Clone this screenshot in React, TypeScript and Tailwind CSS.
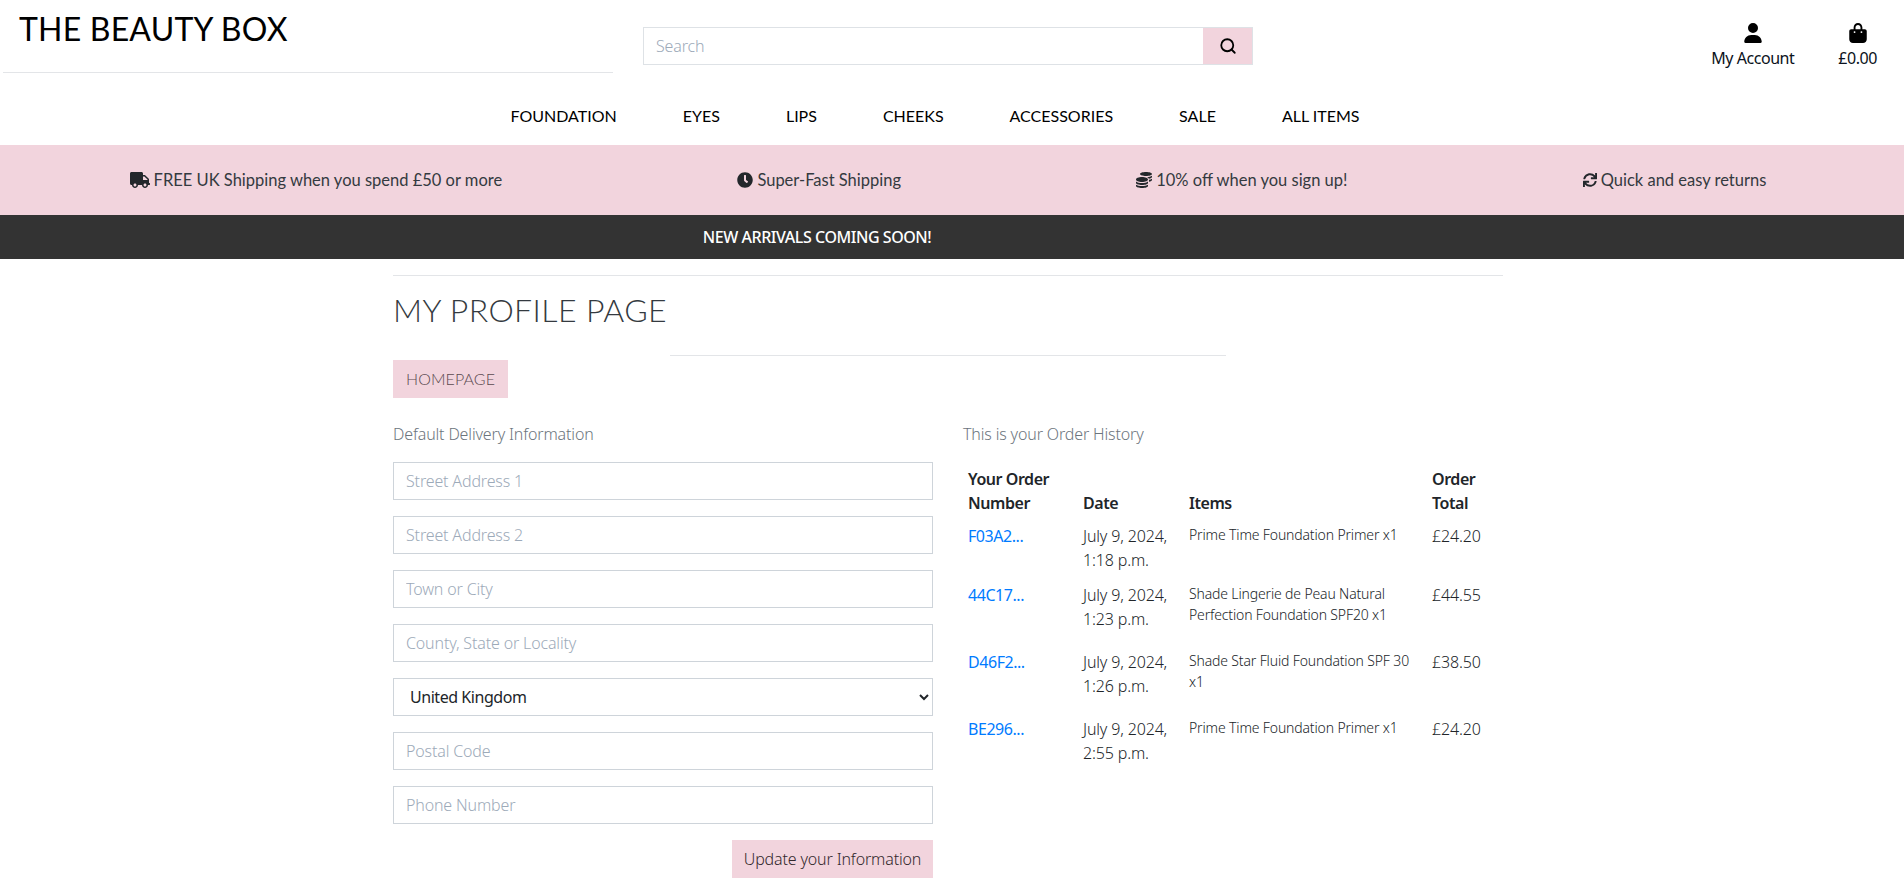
import { FaCoins, FaClock, FaSync, FaTruck } from 'react-icons/fa';
import { FaBagShopping, FaUser } from 'react-icons/fa6';
import { Search } from 'lucide-react';

const navLinks = ['FOUNDATION', 'EYES', 'LIPS', 'CHEEKS', 'ACCESSORIES', 'SALE', 'ALL ITEMS'];

const fields = ['Street Address 1', 'Street Address 2', 'Town or City', 'County, State or Locality'];

const orders = [
  { id: 'F03A2...', date: 'July 9, 2024,', time: '1:18 p.m.', item: 'Prime Time Foundation Primer x1', total: '£24.20' },
  { id: '44C17...', date: 'July 9, 2024,', time: '1:23 p.m.', item: 'Shade Lingerie de Peau Natural Perfection Foundation SPF20 x1', total: '£44.55' },
  { id: 'D46F2...', date: 'July 9, 2024,', time: '1:26 p.m.', item: 'Shade Star Fluid Foundation SPF 30 x1', total: '£38.50' },
  { id: 'BE296...', date: 'July 9, 2024,', time: '2:55 p.m.', item: 'Prime Time Foundation Primer x1', total: '£24.20' },
];

const inputClass =
  "block h-[38px] w-full border border-[#ced4da] bg-white px-3 text-[16px] text-[#495057] placeholder:text-[#9daab9] outline-none";

export default function App() {
  return (
    <div className="h-[888px] overflow-hidden bg-white font-['Noto_Sans',sans-serif] text-[16px] font-light tracking-[-0.15px] text-[#212529]">
      {/* Header */}
      <header className="flex h-[101px]">
        <div className="ml-[3px] h-[73px] w-[610px] border-b border-[#e3e5e8] pl-[16px] pt-[7px]">
          <a className="font-['Lato',sans-serif] text-[32px] leading-[44px] font-normal tracking-[0.2px] text-black">THE BEAUTY BOX</a>
        </div>
        <div className="mt-[27px] ml-[30px] flex h-[38px] w-[610px] border border-[#dee2e6]">
          <input placeholder="Search" className="min-w-0 flex-1 px-3 text-[16px] outline-none placeholder:text-[#9daab9]" />
          <button className="flex w-[49px] items-center justify-center bg-[#f2d4dd] text-black">
            <Search size={18} strokeWidth={2.4} />
          </button>
        </div>
        <div className="ml-auto flex pt-[23px] pr-[27px] font-normal tracking-[-0.45px] text-[#0b1220]">
          <a className="flex flex-col items-center">
            <FaUser className="h-5 w-5 text-black" />
            <span className="mt-[3px] leading-[24px]">My Account</span>
          </a>
          <a className="ml-[44px] flex flex-col items-center">
            <FaBagShopping className="h-5 w-5 text-black" />
            <span className="mt-[3px] leading-[24px]">£0.00</span>
          </a>
        </div>
      </header>

      {/* Nav */}
      <nav className="flex h-[44px] items-start justify-center gap-[66px] pt-[4px] pr-[34px] font-['Lato',sans-serif] text-[16px] leading-[22px] font-normal tracking-normal text-black">
        {navLinks.map((link) => (
          <a key={link}>{link}</a>
        ))}
      </nav>

      {/* Delivery banner */}
      <div className="flex h-[70px] items-center justify-around bg-[#f2d4dd] pr-[20px] pl-[12px] font-['Lato',sans-serif] text-[16.5px] font-normal tracking-normal text-[#343a40]">
        <span className="flex items-center gap-[4px]"><FaTruck className="h-4 w-[20px] text-[#23272b]" />FREE UK Shipping when you spend £50 or more</span>
        <span className="flex items-center gap-[4px]"><FaClock className="h-4 w-4 text-[#23272b]" />Super-Fast Shipping</span>
        <span className="flex items-center gap-[4px]"><FaCoins className="h-4 w-4 text-[#23272b]" />10% off when you sign up!</span>
        <span className="flex items-center gap-[4px]"><FaSync className="h-[14px] w-[14px] text-[#23272b]" />Quick and easy returns</span>
      </div>

      {/* Announcement */}
      <div className="flex h-[44px] items-center justify-center bg-[#333333] pr-[270px] text-[16px] font-medium tracking-[-0.45px] text-white">
        NEW ARRIVALS COMING SOON!
      </div>

      {/* Main */}
      <main className="mt-[16px] ml-[393px] w-[1110px]">
        <hr className="border-[#e3e5e8]" />
        <div className="relative h-[84px]">
          <h1 className="pt-[12px] font-['Lato',sans-serif] text-[32px] leading-[44px] font-light tracking-[0.4px] text-[#343a40]">MY PROFILE PAGE</h1>
          <hr className="absolute top-[79px] left-[277px] w-[556px] border-[#e3e5e8]" />
        </div>
        <a className="inline-flex h-[38px] items-center bg-[#f2d4dd] px-[13px] font-['Lato',sans-serif] text-[16px] font-light tracking-[0.1px] text-[#5b4a50]">HOMEPAGE</a>

        <div className="mt-[24px] flex gap-[30px]">
          <section className="w-[540px]">
            <p className="leading-[24px] text-[#6c757d]">Default Delivery Information</p>
            <form className="mt-[16px] flex flex-col gap-[16px]">
              {fields.map((field) => (
                <input key={field} placeholder={field} className={inputClass} />
              ))}
              <select defaultValue="United Kingdom" className="h-[38px] w-full border border-[#ced4da] bg-white pl-[12px] pr-[2px] text-[16px] font-normal tracking-[-0.45px] text-[#212529] outline-none">
                <option>United Kingdom</option>
              </select>
              <input placeholder="Postal Code" className={inputClass} />
              <input placeholder="Phone Number" className={inputClass} />
              <div className="flex justify-end">
                <button type="button" className="h-[38px] w-[201px] bg-[#f2d4dd] text-[16px] text-[#33282c]">Update your Information</button>
              </div>
            </form>
          </section>

          <section className="w-[540px]">
            <p className="leading-[24px] text-[#6c757d]">This is your Order History</p>
            <table className="mt-[17px] ml-[1px] w-[539px] table-fixed border-collapse text-left">
              <colgroup>
                <col className="w-[115px]" />
                <col className="w-[106px]" />
                <col className="w-[243px]" />
                <col />
              </colgroup>
              <thead>
                <tr className="align-bottom">
                  <th className="px-[4px] pt-[4px] pb-[5px] font-semibold tracking-[-0.45px] leading-[24px]">Your Order<br />Number</th>
                  <th className="px-[4px] pb-[5px] font-semibold tracking-[-0.45px] leading-[24px]">Date</th>
                  <th className="px-[4px] pb-[5px] font-semibold tracking-[-0.45px] leading-[24px]">Items</th>
                  <th className="px-[4px] pb-[5px] font-semibold tracking-[-0.45px] leading-[24px]">Order<br />Total</th>
                </tr>
              </thead>
              <tbody>
                {orders.map((order) => (
                  <tr key={order.id} className="align-top">
                    <td className="px-[4px] pt-[4px] pb-[7px] leading-[24px] font-normal tracking-[-0.45px] text-[#007bff]">{order.id}</td>
                    <td className="px-[4px] pt-[4px] pb-[7px] leading-[24px] whitespace-nowrap">{order.date}<br />{order.time}</td>
                    <td className="pt-[4px] pr-[14px] pb-[21px] pl-[4px] text-[14px] leading-[21px]">{order.item}</td>
                    <td className="px-[4px] pt-[4px] pb-[7px] leading-[24px]">{order.total}</td>
                  </tr>
                ))}
              </tbody>
            </table>
          </section>
        </div>
      </main>
    </div>
  );
}
